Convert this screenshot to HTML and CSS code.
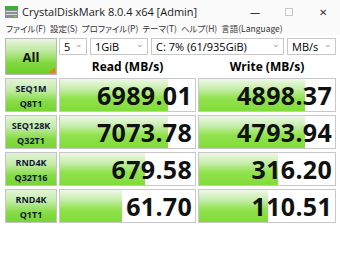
FILE: index.html
```html
<!DOCTYPE html>
<html lang="ja">
  <head>
    <meta charset="UTF-8" />
    <title>CrystalDiskMark</title>
    <link rel="stylesheet" href="styles.css">
  </head>
  <body>
    <div class="titlebar">
      <svg class="appIcon" width="13" height="12" viewBox="0 0 13 12">
        <rect x="0" y="0" width="13" height="12" fill="#8a8f94"/>
        <rect x="0" y="0" width="13" height="4" fill="#3fae3f"/>
        <rect x="1" y="5" width="11" height="1" fill="#d8dde0"/>
        <rect x="1" y="8" width="11" height="1" fill="#d8dde0"/>
        <rect x="9" y="10" width="2" height="1" fill="#7ed04a"/>
      </svg>
      <span class="title">CrystalDiskMark 8.0.4 x64 [Admin]</span>
      <div class="controls">
        <span class="ctl">&#8212;</span>
        <span class="ctl box"></span>
        <span class="ctl">&#10005;</span>
      </div>
    </div>
    <div class="menubar">
      <span>ファイル(F)</span>
      <span>設定(S)</span>
      <span>プロファイル(P)</span>
      <span>テーマ(T)</span>
      <span>ヘルプ(H)</span>
      <span>言語(Language)</span>
    </div>

    <div class="main">
      <button class="allBtn">All</button>
      <div class="selects">
        <div class="sel w5">5<i>&#8964;</i></div>
        <div class="sel wSize">1GiB<i>&#8964;</i></div>
        <div class="sel wDrive">C: 7% (61/935GiB)<i>&#8964;</i></div>
        <div class="sel wUnit">MB/s<i>&#8964;</i></div>
      </div>
      <div class="head">Read (MB/s)</div>
      <div class="head">Write (MB/s)</div>

      <div class="label">SEQ1M<br>Q8T1</div>
      <div class="cell"><div class="bar" style="width: 80%"></div><span>6989.01</span></div>
      <div class="cell"><div class="bar" style="width: 78%"></div><span>4898.37</span></div>

      <div class="label">SEQ128K<br>Q32T1</div>
      <div class="cell"><div class="bar" style="width: 80%"></div><span>7073.78</span></div>
      <div class="cell"><div class="bar" style="width: 78%"></div><span>4793.94</span></div>

      <div class="label">RND4K<br>Q32T16</div>
      <div class="cell"><div class="bar" style="width: 63%"></div><span>679.58</span></div>
      <div class="cell"><div class="bar" style="width: 58%"></div><span>316.20</span></div>

      <div class="label">RND4K<br>Q1T1</div>
      <div class="cell"><div class="bar" style="width: 46%"></div><span>61.70</span></div>
      <div class="cell"><div class="bar" style="width: 51%"></div><span>110.51</span></div>
    </div>
  </body>
</html>
```

FILE: styles.css
```css
* {
  margin: 0;
  padding: 0;
  box-sizing: border-box;
}
body {
  width: 340px;
  height: 275px;
  background-color: #fff;
  font-family: "Open Sans", "Noto Sans CJK JP", sans-serif;
  color: #000;
  overflow: hidden;
}
.titlebar {
  height: 21px;
  display: flex;
  align-items: center;
  padding-left: 5px;
  padding-top: 2px;
  background-color: #fbfbfb;
}
.appIcon {
  margin-right: 4px;
}
.title {
  font-size: 11px;
  color: #1a1a1a;
}
.controls {
  margin-left: auto;
  display: flex;
  align-items: center;
}
.ctl {
  width: 34px;
  text-align: center;
  font-size: 10px;
  color: #333;
}
.ctl.box {
  width: 8px;
  height: 8px;
  margin: 0 13px;
  border: 1px solid #c8c8c8;
}
.menubar {
  height: 14px;
  display: flex;
  align-items: center;
  gap: 4px;
  padding-left: 6px;
  font-family: "Noto Sans CJK JP", sans-serif;
  font-feature-settings: "palt";
  font-size: 8.5px;
  line-height: 14px;
  white-space: nowrap;
  color: #333;
  background-color: #fbfbfb;
}
.menubar span {
  flex-shrink: 0;
}
.main {
  display: grid;
  grid-template-columns: 52px 137px 138px;
  grid-template-rows: 17px 17px repeat(4, 34px);
  column-gap: 2px;
  row-gap: 3px;
  padding: 3px 0 0 5px;
}
.allBtn {
  grid-row: 1 / 3;
  position: relative;
  border: 1px solid #b8b8b8;
  background: linear-gradient(#e8f6df 0%, #bde89d 35%, #7fd83c 70%, #6fcf2c 100%);
  font-family: "Open Sans", sans-serif;
  font-weight: 700;
  font-size: 13px;
  color: #111;
}
.allBtn::after {
  content: "";
  position: absolute;
  right: 1px;
  bottom: 1px;
  border-left: 6px solid transparent;
  border-bottom: 6px solid #f07b1e;
}
.selects {
  grid-column: 2 / 4;
  display: flex;
  gap: 3px;
}
.sel {
  position: relative;
  height: 17px;
  border: 1px solid #c8c8c8;
  background-color: #fff;
  font-size: 11px;
  line-height: 15px;
  padding-left: 4px;
}
.sel i {
  position: absolute;
  right: 3px;
  top: -3px;
  font-style: normal;
  font-size: 9px;
  color: #999;
}
.w5 { width: 28px; }
.wSize { width: 58px; }
.wDrive { width: 133px; }
.wUnit { width: 49px; }
.head {
  font-weight: 700;
  font-size: 12px;
  text-align: center;
  line-height: 17px;
}
.label {
  border: 1px solid #c4c4c4;
  background: linear-gradient(#e2f4d6 0%, #c3eba6 35%, #86dc45 70%, #78d434 100%);
  font-size: 9px;
  font-weight: 700;
  line-height: 15px;
  text-align: center;
  padding-top: 2px;
  color: #10163a;
}
.cell {
  position: relative;
  border: 1px solid #c8c8c8;
  background-color: #fff;
  display: flex;
  align-items: center;
  justify-content: flex-end;
  padding-right: 3px;
}
.bar {
  position: absolute;
  left: 0;
  top: 0;
  bottom: 0;
  background: linear-gradient(#eef8e8 0%, #c8eeae 30%, #92e24e 60%, #80dc38 100%);
}
.cell span {
  position: relative;
  font-size: 25px;
  font-weight: 700;
  letter-spacing: 0.3px;
  color: #111;
  line-height: 1;
}
```
